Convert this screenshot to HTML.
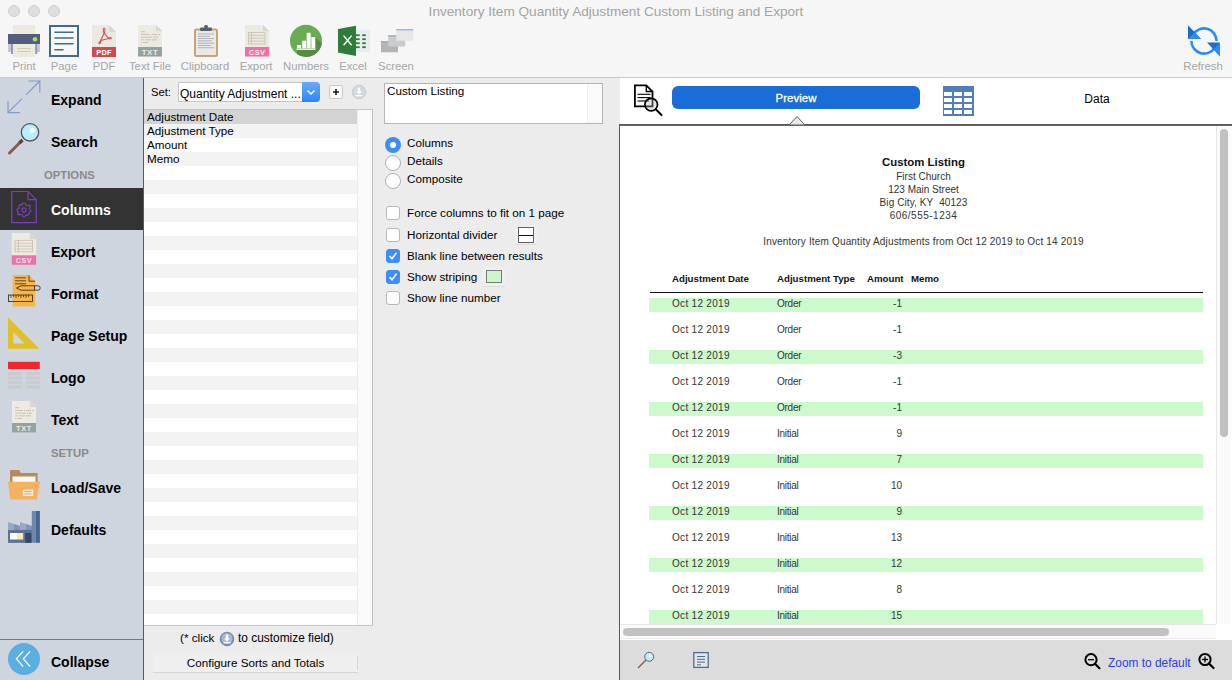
<!DOCTYPE html>
<html><head><meta charset="utf-8">
<style>
*{box-sizing:border-box;margin:0;padding:0}
html,body{width:1232px;height:680px;overflow:hidden;background:#ececec;font-family:"Liberation Sans",sans-serif;color:#000}
.a{position:absolute}
#top{left:0;top:0;width:1232px;height:78px;background:#f6f6f6;border-bottom:1px solid #cacaca}
.title{left:0;width:1232px;top:4px;text-align:center;font-size:13.6px;color:#a3a3a3;white-space:nowrap}
.tl{width:12px;height:12px;border-radius:50%;background:#dedede;border:1px solid #d0d0d0;top:5px}
.lbl{font-size:11.3px;color:#a6a6a6;top:60px;white-space:nowrap;text-align:center}
#side{left:0;top:78px;width:143px;height:602px;background:#cfd5de}
#sideb{left:143px;top:78px;width:1px;height:602px;background:#5a5a5a}
.si{left:51px;margin-top:2px;font-size:14px;font-weight:bold;white-space:nowrap;color:#000}
.sh{margin-top:1px;font-size:11.3px;font-weight:bold;color:#8a8a8a;white-space:nowrap}
#mid{left:144px;top:78px;width:476px;height:602px;background:#ececec}
.txt11{font-size:11.7px;white-space:nowrap}
#right{left:620px;top:78px;width:612px;height:602px;background:#fff}
.rep{font-size:10px;color:#333;white-space:nowrap}
.row{left:649px;width:554px;height:14px}
.cb{left:386px;width:14px;height:14px;border-radius:3px;background:#fff;border:1px solid #b8b8b8}
.cb.on{background:#3d8ff5;border-color:#3d8ff5}
.rep.b{font-weight:bold;font-size:9.7px;color:#111}
.stripe{background:#ccfacc}
</style></head><body>
<!-- TOOLBAR -->
<div id="top" class="a">
  <div class="a title">Inventory Item Quantity Adjustment Custom Listing and Export</div>
  <div class="a tl" style="left:8px"></div>
  <div class="a tl" style="left:28px"></div>
  <div class="a tl" style="left:48px"></div>
<svg class="a" style="left:0;top:0" width="440" height="77" viewBox="0 0 440 77">
 <!-- Print -->
 <rect x="13" y="25" width="22" height="10" fill="#efebdc"/>
 <rect x="8" y="34" width="32" height="10" fill="#535d80"/>
 <circle cx="35" cy="39.3" r="2.3" fill="#a6e060"/>
 <rect x="8" y="44" width="32" height="8" fill="#c8cac8"/>
 <rect x="11" y="44" width="2" height="10" fill="#8a9ad0"/>
 <rect x="35.2" y="44" width="2" height="10" fill="#8a9ad0"/>
 <rect x="13" y="44" width="22" height="13" fill="#efebdc"/>
 <rect x="17" y="48" width="14" height="0.9" fill="#cfcaa8"/>
 <rect x="17" y="51" width="14" height="0.9" fill="#cfcaa8"/>
 <!-- Page -->
 <rect x="50" y="26" width="28" height="30" fill="#f7f7f7" stroke="#3e6b90" stroke-width="2"/>
 <g stroke="#3e6b90" stroke-width="1.6" stroke-linecap="round">
  <line x1="55" y1="32.2" x2="73" y2="32.2"/><line x1="55" y1="38" x2="73" y2="38"/>
  <line x1="55" y1="43.8" x2="73" y2="43.8"/><line x1="55" y1="49.8" x2="63" y2="49.8"/>
 </g>
 <!-- PDF -->
 <path d="M92 25 H109 L116 32 V57 H92 Z" fill="#ebe9df"/>
 <path d="M109 25 V32 H116 Z" fill="#dad7c8"/>
 <rect x="92" y="47" width="24" height="10" fill="#d24a4f"/>
 <text x="104" y="55" font-family="Liberation Sans" font-weight="bold" font-size="7.4" fill="#fff" text-anchor="middle" letter-spacing="0.2">PDF</text>
 <g fill="none" stroke="#d24a4f" stroke-width="1.05" stroke-linejoin="round">
  <path d="M104.2 33.2 C103 31.5 102.9 28.6 104 28.3 C105.2 28.1 105.3 31.2 104.2 33.2 Z"/>
  <path d="M104.2 33.2 L100.6 40.6 C99.6 41.5 98.4 43.5 99.3 43.7 C100.3 43.9 101.2 41.8 100.6 40.6 Z"/>
  <path d="M100.6 40.6 L108.6 38.4 C109.8 39.4 111.4 39 111.3 38.1 C111.1 37.1 109.4 37.3 108.6 38.4 Z"/>
  <path d="M108.6 38.4 L104.2 33.2"/>
 </g>
 <!-- TXT -->
 <path d="M138 25 H156 L162 31 V56.5 H138 Z" fill="#ecebe2"/>
 <path d="M156 25 V31 H162 Z" fill="#d9d7c8"/>
 <rect x="138" y="47" width="24" height="9.5" fill="#93a3a0"/>
 <text x="150" y="55" font-family="Liberation Sans" font-weight="bold" font-size="7.8" fill="#e8eceb" text-anchor="middle" letter-spacing="0.6">TXT</text>
 <g fill="#cbb9b0">
  <rect x="141" y="31.3" width="4" height="0.9"/><rect x="141" y="34" width="8" height="0.9"/><rect x="150" y="34" width="1" height="0.9"/><rect x="152" y="34" width="5" height="0.9"/><rect x="158" y="34" width="2" height="0.9"/>
  <rect x="141" y="36.7" width="11" height="0.9"/><rect x="153" y="36.7" width="5" height="0.9"/>
  <rect x="141" y="39.4" width="3" height="0.9"/><rect x="145" y="39.4" width="6" height="0.9"/><rect x="152" y="39.4" width="5" height="0.9"/>
  <rect x="141" y="42.1" width="1" height="0.9"/><rect x="143" y="42.1" width="5" height="0.9"/>
 </g>
 <!-- Clipboard -->
 <rect x="195" y="29.5" width="22" height="26.5" rx="1.5" fill="#e9e9e9" stroke="#c9a470" stroke-width="2"/>
 <rect x="200" y="27.5" width="12" height="3.5" rx="1" fill="#586070"/>
 <rect x="204" y="25" width="4" height="3" rx="1.5" fill="#586070"/>
 <g fill="#a8adb5">
  <rect x="198" y="33.5" width="16" height="0.9"/><rect x="198" y="35.8" width="12" height="0.9"/><rect x="198" y="38.1" width="16" height="0.9"/>
  <rect x="198" y="40.4" width="14" height="0.9"/><rect x="198" y="42.7" width="16" height="0.9"/><rect x="198" y="45" width="13" height="0.9"/><rect x="198" y="47.3" width="16" height="0.9"/>
 </g>
 <!-- CSV -->
 <path d="M245 25 H263 L269.3 31.3 V56.5 H245 Z" fill="#ecebe2"/>
 <path d="M263 25 V31.3 H269.3 Z" fill="#d9d7c8"/>
 <rect x="245" y="47" width="24.3" height="9.5" fill="#ef6fa8"/>
 <text x="257.2" y="55" font-family="Liberation Sans" font-weight="bold" font-size="7.4" fill="#fde8f0" text-anchor="middle" letter-spacing="0.5">CSV</text>
 <g fill="none" stroke="#cbbcb2" stroke-width="0.8">
  <rect x="248.5" y="32.5" width="16.5" height="11.5"/>
  <line x1="251.5" y1="32.5" x2="251.5" y2="44"/>
  <line x1="248.5" y1="35.3" x2="265" y2="35.3"/><line x1="248.5" y1="38.2" x2="265" y2="38.2"/><line x1="248.5" y1="41.1" x2="265" y2="41.1"/>
 </g>
 <!-- Numbers -->
 <circle cx="306" cy="40.7" r="16" fill="#6aac55"/>
 <path d="M315 37 L322 43.5 A16 16 0 0 1 297 54 L297 49 Z" fill="#568a45"/>
 <g fill="#fff">
  <rect x="297" y="45" width="4.2" height="3.5"/><rect x="302.2" y="40.7" width="4" height="7.8"/>
  <rect x="306.7" y="32.8" width="4" height="15.7"/><rect x="311.3" y="37" width="4" height="11.5"/>
  <rect x="296.5" y="48.5" width="19" height="1.5" fill="#e8f2e4"/>
 </g>
 <!-- Excel -->
 <rect x="356" y="30" width="14" height="22" fill="#e9edf0"/>
 <g fill="#2e7d3a">
  <rect x="356" y="34.3" width="3.7" height="1.8"/><rect x="362.2" y="34.3" width="3.6" height="1.8"/><rect x="356" y="38.3" width="3.7" height="1.8"/><rect x="362.2" y="38.3" width="3.6" height="1.8"/><rect x="356" y="42.3" width="3.7" height="1.8"/><rect x="362.2" y="42.3" width="3.6" height="1.8"/><rect x="356" y="46.3" width="3.7" height="1.8"/><rect x="362.2" y="46.3" width="3.6" height="1.8"/></g>
 <path d="M338 29 L356 25.8 V56 L338 52.5 Z" fill="#2e7d3a"/>
 <path d="M343.6 35.6 L351.6 45.3 M351.6 35.6 L343.6 45.3" stroke="#fff" stroke-width="1.4"/>
 <!-- Screen -->
 <rect x="381" y="41" width="17" height="11.3" fill="#b4b4b4"/>
 <rect x="381" y="41" width="17" height="1.3" fill="#7fb6e8"/>
 <rect x="388.2" y="35.2" width="17" height="11.3" fill="#cbcbcb"/>
 <rect x="388.2" y="35.2" width="17" height="1.3" fill="#7fb6e8"/>
 <rect x="396.2" y="29.1" width="17" height="11.6" fill="#e6e6e6"/>
 <rect x="396.2" y="29.1" width="17" height="1.3" fill="#7fb6e8"/>
</svg>
<svg class="a" style="left:1180px;top:20px" width="50" height="45" viewBox="1180 20 50 45">
 <path d="M1193.1 34.7 A12.6 12.6 0 0 1 1216.6 41" fill="none" stroke="#2a8cf2" stroke-width="2.6"/>
 <path d="M1191.4 41 A12.6 12.6 0 0 0 1214.9 47.3" fill="none" stroke="#2a8cf2" stroke-width="2.6"/>
 <path d="M1188 25.3 V39 H1201 Z" fill="#1a6bd0"/>
 <path d="M1188 39 H1201 L1194.5 32.2 Z" fill="#2a8cf2"/>
 <path d="M1220 56.2 V42.5 H1207 Z" fill="#1a6bd0"/>
 <path d="M1220 42.5 V56.2 L1213.5 49.4 Z" fill="#2a8cf2"/>
</svg>
  <div class="a lbl" style="left:4px;width:40px">Print</div>
  <div class="a lbl" style="left:44px;width:40px">Page</div>
  <div class="a lbl" style="left:84px;width:40px">PDF</div>
  <div class="a lbl" style="left:125px;width:50px">Text File</div>
  <div class="a lbl" style="left:175px;width:60px">Clipboard</div>
  <div class="a lbl" style="left:236px;width:40px">Export</div>
  <div class="a lbl" style="left:281px;width:50px">Numbers</div>
  <div class="a lbl" style="left:333px;width:40px">Excel</div>
  <div class="a lbl" style="left:376px;width:40px">Screen</div>
  <div class="a lbl" style="left:1183px;width:40px">Refresh</div>
</div>

<!-- SIDEBAR -->
<div id="side" class="a"></div>
<div id="sideb" class="a"></div>
<div class="a" style="left:0;top:188px;width:143px;height:42px;background:#333"></div>
<svg class="a" style="left:0;top:78px" width="143" height="602" viewBox="0 78 143 602">
 <!-- Expand -->
 <g fill="none" stroke="#8299cc" stroke-width="1.15">
  <path d="M28.5 81 H39.8 V92.5"/><line x1="39.8" y1="81" x2="26" y2="94.8"/>
  <path d="M8 101 V112.6 H19.8"/><line x1="8" y1="112.6" x2="22" y2="98.6"/>
 </g>
 <!-- Search -->
 <line x1="9.5" y1="153" x2="21" y2="141.5" stroke="#8b5a4a" stroke-width="3" stroke-linecap="round"/>
 <line x1="19.5" y1="143" x2="22.5" y2="140" stroke="#5a4040" stroke-width="3.2"/>
 <circle cx="30" cy="132.3" r="8.7" fill="#b8eef8" stroke="#5a5060" stroke-width="1.3"/>
 <circle cx="32.3" cy="130.5" r="2.6" fill="#fff"/>
 <!-- Columns -->
 <path d="M11.8 191.5 H28 L36.2 199.7 V222.7 H11.8 Z" fill="none" stroke="#7b3fc4" stroke-width="1.2"/>
 <path d="M28 191.5 V199.7 H36.2" fill="none" stroke="#7b3fc4" stroke-width="1.2"/>
 <g transform="translate(24,210)" fill="none" stroke="#7b3fc4" stroke-width="1.1">
  <circle r="2.1"/>
  <path d="M-1.4 -6.8 L1.4 -6.8 L1.9 -4.8 L3.5 -4.0 L5.3 -5.0 L6.4 -3.9 L5.6 -1.9 L6.2 -0.3 L6.9 1.3 L5.0 2.3 L5.2 4.0 L3.4 5.6 L1.8 4.9 L0.6 6.8 L-1.2 6.8 L-1.9 4.8 L-3.5 4.0 L-5.3 5.0 L-6.4 3.9 L-5.6 1.9 L-6.8 0.9 L-6.8 -1.2 L-4.9 -1.8 L-5.2 -4.0 L-3.4 -5.6 L-1.8 -4.9 Z"/>
 </g>
 <!-- Export CSV -->
 <path d="M11.7 233 H30 L36.2 239.2 V264.8 H11.7 Z" fill="#ecebe2"/>
 <path d="M30 233 V239.2 H36.2 Z" fill="#d9d7c8"/>
 <rect x="11.7" y="255.3" width="24.5" height="9.5" fill="#ef6fa8"/>
 <text x="24" y="263.2" font-family="Liberation Sans" font-weight="bold" font-size="7.2" fill="#fde8f0" text-anchor="middle" letter-spacing="0.5">CSV</text>
 <g fill="none" stroke="#cbbcb2" stroke-width="0.8">
  <rect x="15" y="240.3" width="17.5" height="11.5"/>
  <line x1="18.5" y1="240.3" x2="18.5" y2="251.8"/>
  <line x1="15" y1="243.2" x2="32.5" y2="243.2"/><line x1="15" y1="246.1" x2="32.5" y2="246.1"/><line x1="15" y1="249" x2="32.5" y2="249"/>
 </g>
 <!-- Format -->
 <path d="M12.7 275 H29 L35.2 281.2 V306.5 H12.7 Z" fill="#f8b548"/>
 <path d="M29 275.5 V281.2 H35" fill="none" stroke="#4a4030" stroke-width="1"/>
 <g fill="#5a4a30">
  <rect x="15" y="277.3" width="11" height="1"/><rect x="15" y="280.3" width="11" height="1"/><rect x="15" y="283.3" width="11" height="1"/>
 </g>
 <path d="M16.5 288 L21 285.8 H38 A1.8 1.8 0 0 1 38 290.2 H21 Z" fill="none" stroke="#3a3428" stroke-width="0.9"/>
 <line x1="34.5" y1="285.8" x2="34.5" y2="290.2" stroke="#3a3428" stroke-width="0.9"/>
 <rect x="8.5" y="295" width="24" height="6.5" fill="none" stroke="#3a3428" stroke-width="0.9"/>
 <g stroke="#3a3428" stroke-width="0.8">
  <line x1="11" y1="295" x2="11" y2="298"/><line x1="13.5" y1="295" x2="13.5" y2="297"/><line x1="16" y1="295" x2="16" y2="298"/><line x1="18.5" y1="295" x2="18.5" y2="297"/><line x1="21" y1="295" x2="21" y2="298"/><line x1="23.5" y1="295" x2="23.5" y2="297"/><line x1="26" y1="295" x2="26" y2="298"/><line x1="28.5" y1="295" x2="28.5" y2="297"/>
 </g>
 <!-- Page Setup -->
 <path d="M8 317.3 L39.4 348.8 H8 Z M13.3 332 V343.6 H24.5 Z" fill="#dfbf2a" fill-rule="evenodd"/>
 <!-- Logo -->
 <rect x="8" y="361.8" width="31.8" height="7.2" fill="#f0282d"/>
 <g fill="#c9cbcc">
  <rect x="8" y="372" width="14" height="3"/><rect x="8" y="376.5" width="14" height="3"/><rect x="8" y="381" width="14" height="3"/><rect x="8" y="385.5" width="14" height="3"/>
  <rect x="26" y="372" width="14" height="3"/><rect x="26" y="376.5" width="14" height="3"/><rect x="26" y="381" width="14" height="3"/><rect x="26" y="385.5" width="14" height="3"/>
 </g>
 <!-- Text TXT -->
 <path d="M12 401 H30 L36 407 V432.5 H12 Z" fill="#ecebe2"/>
 <path d="M30 401 V407 H36 Z" fill="#d9d7c8"/>
 <rect x="12" y="423" width="24" height="9.5" fill="#93a3a0"/>
 <text x="24" y="431" font-family="Liberation Sans" font-weight="bold" font-size="7.5" fill="#e8eceb" text-anchor="middle" letter-spacing="0.6">TXT</text>
 <g fill="#cbb9b0">
  <rect x="15" y="407.3" width="4" height="0.9"/><rect x="15" y="410" width="8" height="0.9"/><rect x="24" y="410" width="1" height="0.9"/><rect x="26" y="410" width="5" height="0.9"/><rect x="32" y="410" width="2" height="0.9"/>
  <rect x="15" y="412.7" width="11" height="0.9"/><rect x="27" y="412.7" width="5" height="0.9"/>
  <rect x="15" y="415.4" width="3" height="0.9"/><rect x="19" y="415.4" width="6" height="0.9"/><rect x="26" y="415.4" width="5" height="0.9"/>
  <rect x="15" y="418.1" width="1" height="0.9"/><rect x="17" y="418.1" width="5" height="0.9"/>
 </g>
 <!-- Load/Save folder -->
 <path d="M10 470 H19 L21 473 H37.6 V484 H10 Z" fill="#b88b5a"/>
 <rect x="12.5" y="476.5" width="23" height="8" fill="#fbfbfb"/>
 <path d="M8 481.8 H40 L37 499.6 H10.5 Z" fill="#f5b060"/>
 <rect x="22.8" y="489.5" width="10.5" height="6.5" fill="#f0e8d0"/>
 <g fill="#b8ae90"><rect x="24.5" y="491" width="7" height="0.8"/><rect x="24.5" y="493.5" width="7" height="0.8"/></g>
 <!-- Defaults factory -->
 <path d="M8 522 L20 526 V522 L32 526 V542.8 H8 Z" fill="#95a8c6"/>
 <path d="M14 524 L20 526 V530 H14 Z M26 524 L32 526 V530 H26 Z" fill="#7f95b8"/>
 <rect x="8" y="530" width="24" height="12.8" fill="#5a729a"/>
 <rect x="10" y="533" width="7" height="6.5" fill="#ffffff"/>
 <rect x="17" y="533" width="6.2" height="6.5" fill="#fde6b8"/>
 <rect x="25.3" y="533" width="6.2" height="9.8" fill="#34486a"/>
 <rect x="31.8" y="511" width="4.2" height="31.8" fill="#7088b0"/>
 <rect x="36" y="511" width="3.9" height="31.8" fill="#4a6591"/>
 <!-- Collapse -->
 <circle cx="24" cy="659" r="16" fill="#5aafe0"/>
 <g fill="none" stroke="#fff" stroke-width="1.2">
  <path d="M23.1 651.3 L16.4 658.8 L23.1 666.5"/><path d="M30.1 651.3 L23.4 658.8 L30.1 666.5"/>
 </g>
</svg>
<div class="a si" style="top:90px">Expand</div>
<div class="a si" style="top:132px">Search</div>
<div class="a sh" style="left:44px;top:168px">OPTIONS</div>
<div class="a si" style="top:200px;color:#fff">Columns</div>
<div class="a si" style="top:242px">Export</div>
<div class="a si" style="top:284px">Format</div>
<div class="a si" style="top:326px">Page Setup</div>
<div class="a si" style="top:368px">Logo</div>
<div class="a si" style="top:410px">Text</div>
<div class="a sh" style="left:51px;top:446px">SETUP</div>
<div class="a si" style="top:478px">Load/Save</div>
<div class="a si" style="top:520px">Defaults</div>
<div class="a" style="left:0;top:639px;width:143px;height:1px;background:#7a7a7a"></div>
<div class="a si" style="top:652px">Collapse</div>

<!-- MIDDLE -->
<div id="mid" class="a"></div>
<div class="a txt11" style="left:151px;top:86px;font-size:11.2px">Set:</div>
<div class="a" style="left:178px;top:82px;width:142px;height:20px;background:#fff;border:1px solid #c4c4c4;border-radius:0 4px 4px 0"></div>
<div class="a txt11" style="left:180px;top:87px;font-size:12px;width:122px;overflow:hidden">Quantity Adjustment ...</div>
<div class="a" style="left:302px;top:82px;width:18px;height:20px;background:linear-gradient(#6aaaf8,#2a86f6);border-radius:0 4px 4px 0"></div>
<svg class="a" style="left:302px;top:82px" width="18" height="20"><path d="M5.5 8.5 L9 12 L12.5 8.5" fill="none" stroke="#fff" stroke-width="1.4"/></svg>
<div class="a" style="left:329px;top:85px;width:14px;height:14px;background:#fafafa;border:1px solid #c8c8c8;border-radius:2px"></div>
<svg class="a" style="left:329px;top:85px" width="14" height="14"><path d="M7 4 V10 M4 7 H10" stroke="#222" stroke-width="1.7"/></svg>
<svg class="a" style="left:351px;top:84px" width="16" height="16">
 <circle cx="8" cy="8" r="6.8" fill="#d3d7de" stroke="#c0c5ce" stroke-width="0.8"/>
 <path d="M6.8 3.8 H9.2 V7.5 H11 L8 10.5 L5 7.5 H6.8 Z" fill="#fff"/>
 <rect x="4.5" y="11" width="7" height="1.3" fill="#fff"/>
</svg>
<div class="a" style="left:144px;top:109px;width:229px;height:1px;background:#c6c6c6"></div>
<div class="a" style="left:144px;top:110px;width:213px;height:14px;background:#d4d4d4"></div>
<div class="a" style="left:144px;top:124px;width:213px;height:14px;background:#f3f3f3"></div>
<div class="a" style="left:144px;top:138px;width:213px;height:14px;background:#ffffff"></div>
<div class="a" style="left:144px;top:152px;width:213px;height:14px;background:#f3f3f3"></div>
<div class="a" style="left:144px;top:166px;width:213px;height:14px;background:#ffffff"></div>
<div class="a" style="left:144px;top:180px;width:213px;height:14px;background:#f3f3f3"></div>
<div class="a" style="left:144px;top:194px;width:213px;height:14px;background:#ffffff"></div>
<div class="a" style="left:144px;top:208px;width:213px;height:14px;background:#f3f3f3"></div>
<div class="a" style="left:144px;top:222px;width:213px;height:14px;background:#ffffff"></div>
<div class="a" style="left:144px;top:236px;width:213px;height:14px;background:#f3f3f3"></div>
<div class="a" style="left:144px;top:250px;width:213px;height:14px;background:#ffffff"></div>
<div class="a" style="left:144px;top:264px;width:213px;height:14px;background:#f3f3f3"></div>
<div class="a" style="left:144px;top:278px;width:213px;height:14px;background:#ffffff"></div>
<div class="a" style="left:144px;top:292px;width:213px;height:14px;background:#f3f3f3"></div>
<div class="a" style="left:144px;top:306px;width:213px;height:14px;background:#ffffff"></div>
<div class="a" style="left:144px;top:320px;width:213px;height:14px;background:#f3f3f3"></div>
<div class="a" style="left:144px;top:334px;width:213px;height:14px;background:#ffffff"></div>
<div class="a" style="left:144px;top:348px;width:213px;height:14px;background:#f3f3f3"></div>
<div class="a" style="left:144px;top:362px;width:213px;height:14px;background:#ffffff"></div>
<div class="a" style="left:144px;top:376px;width:213px;height:14px;background:#f3f3f3"></div>
<div class="a" style="left:144px;top:390px;width:213px;height:14px;background:#ffffff"></div>
<div class="a" style="left:144px;top:404px;width:213px;height:14px;background:#f3f3f3"></div>
<div class="a" style="left:144px;top:418px;width:213px;height:14px;background:#ffffff"></div>
<div class="a" style="left:144px;top:432px;width:213px;height:14px;background:#f3f3f3"></div>
<div class="a" style="left:144px;top:446px;width:213px;height:14px;background:#ffffff"></div>
<div class="a" style="left:144px;top:460px;width:213px;height:14px;background:#f3f3f3"></div>
<div class="a" style="left:144px;top:474px;width:213px;height:14px;background:#ffffff"></div>
<div class="a" style="left:144px;top:488px;width:213px;height:14px;background:#f3f3f3"></div>
<div class="a" style="left:144px;top:502px;width:213px;height:14px;background:#ffffff"></div>
<div class="a" style="left:144px;top:516px;width:213px;height:14px;background:#f3f3f3"></div>
<div class="a" style="left:144px;top:530px;width:213px;height:14px;background:#ffffff"></div>
<div class="a" style="left:144px;top:544px;width:213px;height:14px;background:#f3f3f3"></div>
<div class="a" style="left:144px;top:558px;width:213px;height:14px;background:#ffffff"></div>
<div class="a" style="left:144px;top:572px;width:213px;height:14px;background:#f3f3f3"></div>
<div class="a" style="left:144px;top:586px;width:213px;height:14px;background:#ffffff"></div>
<div class="a" style="left:144px;top:600px;width:213px;height:14px;background:#f3f3f3"></div>
<div class="a" style="left:144px;top:614px;width:213px;height:11px;background:#ffffff"></div>
<div class="a txt11" style="left:147px;top:110px">Adjustment Date</div>
<div class="a txt11" style="left:147px;top:124px">Adjustment Type</div>
<div class="a txt11" style="left:147px;top:138px">Amount</div>
<div class="a txt11" style="left:147px;top:152px">Memo</div>
<div class="a" style="left:357px;top:110px;width:15px;height:515px;background:#fafafa;border-left:1px solid #ececec"></div>
<div class="a" style="left:372px;top:109px;width:1px;height:517px;background:#bdbdbd"></div>
<div class="a" style="left:144px;top:625px;width:229px;height:1px;background:#c6c6c6"></div>
<div class="a txt11" style="left:180px;top:631px">(* click</div>
<svg class="a" style="left:219px;top:631px" width="16" height="16">
 <circle cx="8" cy="8" r="6.8" fill="#7d8fb0" stroke="#6a7a98" stroke-width="0.8"/>
 <circle cx="8" cy="7.5" r="5.5" fill="#a9b8d2"/>
 <path d="M6.8 3.8 H9.2 V7.5 H11 L8 10.5 L5 7.5 H6.8 Z" fill="#fff"/>
 <rect x="4.5" y="11" width="7" height="1.3" fill="#fff"/>
</svg>
<div class="a txt11" style="left:238px;top:631px;font-size:11.9px">to customize field)</div>
<div class="a" style="left:153px;top:653px;width:205px;height:20px;background:#efefef;border-bottom:1px solid #d6d6d6"></div>
<div class="a" style="left:357px;top:656px;width:1px;height:14px;background:#d8d8d8"></div>
<div class="a txt11" style="left:153px;width:205px;text-align:center;top:656px">Configure Sorts and Totals</div>

<div class="a" style="left:384px;top:83px;width:219px;height:41px;background:#fff;border:1px solid #b4b4b4"></div>
<div class="a" style="left:587px;top:84px;width:15px;height:39px;background:#fafafa;border-left:1px solid #eeeeee"></div>
<div class="a txt11" style="left:387px;top:84px">Custom Listing</div>

<div class="a" style="left:385px;top:137px;width:16px;height:16px;border-radius:50%;background:#3d8ff5"></div>
<div class="a" style="left:390px;top:142px;width:6px;height:6px;border-radius:50%;background:#fff"></div>
<div class="a" style="left:385px;top:155px;width:16px;height:16px;border-radius:50%;background:#fff;border:1px solid #b0b0b0"></div>
<div class="a" style="left:385px;top:173px;width:16px;height:16px;border-radius:50%;background:#fff;border:1px solid #b0b0b0"></div>
<div class="a txt11" style="left:407px;top:136px">Columns</div>
<div class="a txt11" style="left:407px;top:154px">Details</div>
<div class="a txt11" style="left:407px;top:172px">Composite</div>

<div class="a cb" style="top:206px"></div>
<div class="a cb" style="top:228px"></div>
<div class="a cb on" style="top:249px"></div>
<div class="a cb on" style="top:270px"></div>
<div class="a cb" style="top:291px"></div>
<svg class="a" style="left:386px;top:249px" width="14" height="35">
 <path d="M3.5 7 L6 9.8 L10.5 3.8" fill="none" stroke="#fff" stroke-width="1.5"/>
 <path d="M3.5 28 L6 30.8 L10.5 24.8" fill="none" stroke="#fff" stroke-width="1.5"/>
</svg>
<div class="a txt11" style="left:407px;top:206px">Force columns to fit on 1 page</div>
<div class="a txt11" style="left:407px;top:228px">Horizontal divider</div>
<div class="a txt11" style="left:407px;top:249px">Blank line between results</div>
<div class="a txt11" style="left:407px;top:270px">Show striping</div>
<div class="a txt11" style="left:407px;top:291px">Show line number</div>
<div class="a" style="left:515px;top:225px;width:22px;height:20px;background:#efefef;border-bottom:1px solid #dcdcdc"></div>
<div class="a" style="left:518px;top:227px;width:16px;height:16px;background:#fff;border:1px solid #606060"></div>
<div class="a" style="left:519px;top:234.7px;width:14px;height:1.5px;background:#111"></div>
<div class="a" style="left:483px;top:267px;width:22px;height:20px;background:#efefef;border-bottom:1px solid #dcdcdc"></div>
<div class="a" style="left:486px;top:270px;width:16px;height:13px;background:#ccf7cc;border:1px solid #7a7a7a"></div>

<!-- RIGHT -->
<div id="right" class="a"></div>
<svg class="a" style="left:620px;top:78px" width="612" height="50" viewBox="620 78 612 50">
 <path d="M634.9 85.3 H646.3 L652.5 91.5 V106.3 H634.9 Z" fill="#fff" stroke="#000" stroke-width="1.8"/>
 <path d="M646.3 85.3 V91.5 H652.5" fill="none" stroke="#000" stroke-width="1.4"/>
 <g stroke="#000" stroke-width="1.1"><line x1="637.5" y1="94.3" x2="650.5" y2="94.3"/><line x1="637.5" y1="97.6" x2="650.5" y2="97.6"/><line x1="637.5" y1="101" x2="649" y2="101"/></g>
 <circle cx="651.2" cy="104.6" r="6.3" fill="#bbb" fill-opacity="0.35" stroke="#000" stroke-width="1.7"/>
 <line x1="655.8" y1="109.3" x2="661.5" y2="115" stroke="#000" stroke-width="2" stroke-linecap="round"/>
 <rect x="943" y="86" width="31" height="30" fill="#4f80b5"/>
 <g fill="#fff">
  <rect x="944" y="92" width="8" height="4"/><rect x="944" y="98" width="8" height="4"/><rect x="944" y="104" width="8" height="4"/><rect x="944" y="110" width="8" height="4"/><rect x="954" y="92" width="8" height="4"/><rect x="954" y="98" width="8" height="4"/><rect x="954" y="104" width="8" height="4"/><rect x="954" y="110" width="8" height="4"/><rect x="964" y="92" width="8" height="4"/><rect x="964" y="98" width="8" height="4"/><rect x="964" y="104" width="8" height="4"/><rect x="964" y="110" width="8" height="4"/>
 </g>
 <path d="M790.2 124.5 L797 117 L803.8 124.5 Z" fill="#e6e6e6" stroke="#666" stroke-width="0.8"/>
</svg>
<div class="a" style="left:672px;top:86px;width:248px;height:23px;background:#1a6dd6;border-radius:6px"></div>
<div class="a" style="left:672px;top:92px;width:248px;text-align:center;color:#fff;font-size:11.4px;-webkit-text-stroke:0.3px #fff;letter-spacing:0.05px;white-space:nowrap">Preview</div>
<div class="a" style="left:1047px;top:92px;width:100px;text-align:center;font-size:12px;white-space:nowrap">Data</div>
<div class="a" style="left:620px;top:124px;width:612px;height:2px;background:linear-gradient(#505050,#6e6e6e)"></div>
<div class="a" style="left:619px;top:124px;width:1px;height:556px;background:#5a5a5a"></div>
<svg class="a" style="left:785px;top:114px" width="25" height="12" viewBox="785 114 25 12"><path d="M789.5 124.6 L797 116.5 L804.5 124.6" fill="#e8e8e8" stroke="#555" stroke-width="0.9"/></svg>

<div class="a" style="left:620px;top:156px;width:607px;text-align:center;font-size:11.4px;font-weight:bold;color:#111;white-space:nowrap">Custom Listing</div>
<div class="a rep" style="left:620px;width:607px;text-align:center;top:170.5px">First Church</div>
<div class="a rep" style="left:620px;width:607px;text-align:center;top:183.5px;letter-spacing:0px">123 Main Street</div>
<div class="a rep" style="left:620px;width:607px;text-align:center;top:196.5px;letter-spacing:0.1px">Big City, KY&nbsp; 40123</div>
<div class="a rep" style="left:620px;width:607px;text-align:center;top:209.5px;letter-spacing:0.5px">606/555-1234</div>
<div class="a rep" style="left:620px;width:607px;text-align:center;top:235.5px;letter-spacing:0.17px">Inventory Item Quantity Adjustments from Oct 12 2019 to Oct 14 2019</div>
<div class="a rep b" style="left:672px;top:273px">Adjustment Date</div>
<div class="a rep b" style="left:777px;top:273px">Adjustment Type</div>
<div class="a rep b" style="left:867px;top:273px">Amount</div>
<div class="a rep b" style="left:911px;top:273px">Memo</div>
<div class="a" style="left:650px;top:292px;width:553px;height:1px;background:#111"></div>
<div class="a stripe" style="left:649px;top:298px;width:554px;height:14px"></div>
<div class="a rep" style="left:672px;top:298px;letter-spacing:0.3px">Oct 12 2019</div><div class="a rep" style="left:777px;top:298px;letter-spacing:-0.25px">Order</div><div class="a rep" style="left:842px;width:60px;text-align:right;top:298px">-1</div>
<div class="a rep" style="left:672px;top:324px;letter-spacing:0.3px">Oct 12 2019</div><div class="a rep" style="left:777px;top:324px;letter-spacing:-0.25px">Order</div><div class="a rep" style="left:842px;width:60px;text-align:right;top:324px">-1</div>
<div class="a stripe" style="left:649px;top:350px;width:554px;height:14px"></div>
<div class="a rep" style="left:672px;top:350px;letter-spacing:0.3px">Oct 12 2019</div><div class="a rep" style="left:777px;top:350px;letter-spacing:-0.25px">Order</div><div class="a rep" style="left:842px;width:60px;text-align:right;top:350px">-3</div>
<div class="a rep" style="left:672px;top:376px;letter-spacing:0.3px">Oct 12 2019</div><div class="a rep" style="left:777px;top:376px;letter-spacing:-0.25px">Order</div><div class="a rep" style="left:842px;width:60px;text-align:right;top:376px">-1</div>
<div class="a stripe" style="left:649px;top:402px;width:554px;height:14px"></div>
<div class="a rep" style="left:672px;top:402px;letter-spacing:0.3px">Oct 12 2019</div><div class="a rep" style="left:777px;top:402px;letter-spacing:-0.25px">Order</div><div class="a rep" style="left:842px;width:60px;text-align:right;top:402px">-1</div>
<div class="a rep" style="left:672px;top:428px;letter-spacing:0.3px">Oct 12 2019</div><div class="a rep" style="left:777px;top:428px;letter-spacing:-0.25px">Initial</div><div class="a rep" style="left:842px;width:60px;text-align:right;top:428px">9</div>
<div class="a stripe" style="left:649px;top:454px;width:554px;height:14px"></div>
<div class="a rep" style="left:672px;top:454px;letter-spacing:0.3px">Oct 12 2019</div><div class="a rep" style="left:777px;top:454px;letter-spacing:-0.25px">Initial</div><div class="a rep" style="left:842px;width:60px;text-align:right;top:454px">7</div>
<div class="a rep" style="left:672px;top:480px;letter-spacing:0.3px">Oct 12 2019</div><div class="a rep" style="left:777px;top:480px;letter-spacing:-0.25px">Initial</div><div class="a rep" style="left:842px;width:60px;text-align:right;top:480px">10</div>
<div class="a stripe" style="left:649px;top:506px;width:554px;height:14px"></div>
<div class="a rep" style="left:672px;top:506px;letter-spacing:0.3px">Oct 12 2019</div><div class="a rep" style="left:777px;top:506px;letter-spacing:-0.25px">Initial</div><div class="a rep" style="left:842px;width:60px;text-align:right;top:506px">9</div>
<div class="a rep" style="left:672px;top:532px;letter-spacing:0.3px">Oct 12 2019</div><div class="a rep" style="left:777px;top:532px;letter-spacing:-0.25px">Initial</div><div class="a rep" style="left:842px;width:60px;text-align:right;top:532px">13</div>
<div class="a stripe" style="left:649px;top:558px;width:554px;height:14px"></div>
<div class="a rep" style="left:672px;top:558px;letter-spacing:0.3px">Oct 12 2019</div><div class="a rep" style="left:777px;top:558px;letter-spacing:-0.25px">Initial</div><div class="a rep" style="left:842px;width:60px;text-align:right;top:558px">12</div>
<div class="a rep" style="left:672px;top:584px;letter-spacing:0.3px">Oct 12 2019</div><div class="a rep" style="left:777px;top:584px;letter-spacing:-0.25px">Initial</div><div class="a rep" style="left:842px;width:60px;text-align:right;top:584px">8</div>
<div class="a stripe" style="left:649px;top:610px;width:554px;height:14px"></div>
<div class="a rep" style="left:672px;top:610px;letter-spacing:0.3px">Oct 12 2019</div><div class="a rep" style="left:777px;top:610px;letter-spacing:-0.25px">Initial</div><div class="a rep" style="left:842px;width:60px;text-align:right;top:610px">15</div>
<div class="a" style="left:1216px;top:126px;width:15px;height:498px;background:#fafafa;border-left:1px solid #e6e6e6"></div>
<div class="a" style="left:1220px;top:129px;width:8px;height:308px;background:#c1c1c1;border-radius:4px"></div>
<div class="a" style="left:620px;top:624px;width:597px;height:15px;background:#fafafa;border-top:1px solid #e6e6e6;border-bottom:1px solid #ececec"></div>
<div class="a" style="left:623px;top:628px;width:546px;height:8px;background:#c1c1c1;border-radius:4px"></div>
<div class="a" style="left:620px;top:640px;width:612px;height:40px;background:#dcdcdc"></div>
<svg class="a" style="left:620px;top:640px" width="612" height="40" viewBox="620 640 612 40">
 <line x1="638.5" y1="667.5" x2="645.5" y2="660.5" stroke="#8b5a4a" stroke-width="1.5" stroke-linecap="round"/>
 <circle cx="649.2" cy="656.8" r="4.5" fill="#b8eef8" stroke="#6a6070" stroke-width="1"/>
 <circle cx="650.3" cy="655.8" r="1.4" fill="#fff"/>
 <rect x="693.8" y="652.6" width="14.4" height="14.8" fill="#e4e6ea" stroke="#4a7090" stroke-width="1.3"/>
 <g stroke="#4a7090" stroke-width="1"><line x1="697" y1="656.5" x2="705" y2="656.5"/><line x1="697" y1="659.3" x2="705" y2="659.3"/><line x1="697" y1="662.1" x2="705" y2="662.1"/><line x1="697" y1="664.8" x2="701" y2="664.8"/></g>
 <circle cx="1091" cy="659.7" r="5.6" fill="none" stroke="#000" stroke-width="2"/>
 <line x1="1095" y1="663.7" x2="1099.5" y2="668.2" stroke="#000" stroke-width="2.2" stroke-linecap="round"/>
 <line x1="1088" y1="659.7" x2="1094" y2="659.7" stroke="#000" stroke-width="1.3"/>
 <circle cx="1205" cy="659.5" r="5.6" fill="none" stroke="#000" stroke-width="2"/>
 <line x1="1209" y1="663.5" x2="1213.5" y2="668" stroke="#000" stroke-width="2.2" stroke-linecap="round"/>
 <line x1="1202" y1="659.5" x2="1208" y2="659.5" stroke="#000" stroke-width="1.3"/>
 <line x1="1205" y1="656.5" x2="1205" y2="662.5" stroke="#000" stroke-width="1.3"/>
</svg>
<div class="a" style="left:1108px;top:656px;font-size:11.9px;color:#2a3cf0;white-space:nowrap">Zoom to default</div>
<div class="a" style="left:1216px;top:624px;width:16px;height:16px;background:#fff"></div>

</body></html>
